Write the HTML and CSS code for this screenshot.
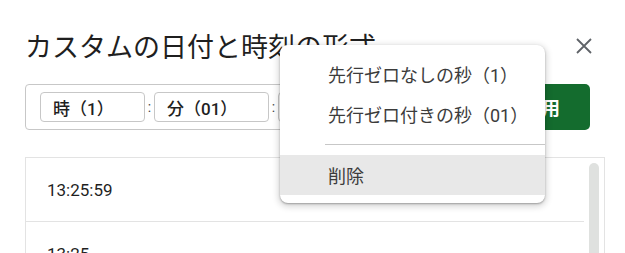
FILE: index.html
```html
<!DOCTYPE html>
<html lang="ja">
<head>
    <meta charset="UTF-8">
    <meta name="viewport" content="width=device-width, initial-scale=1.0">
    <title>カスタムの日付と時刻の形式</title>
    <link rel="stylesheet" href="styles.css">
</head>
<body>
    <div class="dialog">
        <div class="dialog-header">
            <h1 class="dialog-title">カスタムの日付と時刻の形式</h1>
            <button class="close-btn" aria-label="閉じる">
                <svg width="16" height="16" viewBox="0 0 16 16">
                    <path d="M1 1 L15 15 M15 1 L1 15" stroke="#5f6368" stroke-width="1.8" fill="none"/>
                </svg>
            </button>
        </div>

        <div class="format-row">
            <div class="format-input">
                <span class="chip chip-hour">時（1）</span>
                <span class="sep">:</span>
                <span class="chip chip-min">分（01）</span>
                <span class="sep">:</span>
                <span class="chip">秒（01）</span>
            </div>
            <button class="apply-btn">適用</button>
        </div>

        <div class="format-list">
            <div class="list-rows">
                <div class="list-row">13:25:59</div>
                <div class="list-row">13:25</div>
            </div>
            <div class="scroll-track"><div class="scroll-thumb"></div></div>
        </div>

        <!-- context menu for the seconds chip -->
        <div class="menu">
            <div class="menu-item">先行ゼロなしの秒（1）</div>
            <div class="menu-item">先行ゼロ付きの秒（01）</div>
            <div class="menu-divider"></div>
            <div class="menu-item active">削除</div>
        </div>
    </div>
</body>
</html>
```

FILE: styles.css
```css
body {
    margin: 0;
    background-color: #ffffff;
    font-family: Roboto, "Noto Sans CJK JP", sans-serif;
    color: #1f1f1f;
    overflow: hidden;
}

.dialog {
    position: relative;
    width: 625px;
    height: 253px;
    box-sizing: border-box;
    padding: 0 20px 0 25px;
}

.dialog-header {
    display: flex;
    justify-content: space-between;
    align-items: center;
    padding-top: 29px;
    margin-right: 13px;
}

.dialog-title {
    margin: 0;
    font-family: "Noto Sans CJK JP", sans-serif;
    font-size: 27px;
    font-weight: 400;
    line-height: 34px;
    color: #1f1f1f;
}

.close-btn {
    border: none;
    background: none;
    padding: 0;
    width: 16px;
    height: 16px;
    cursor: pointer;
}

.format-row {
    display: flex;
    gap: 12px;
    margin-top: 21px;
    margin-right: 15px;
}

.format-input {
    flex: 1;
    display: flex;
    align-items: center;
    height: 46px;
    box-sizing: border-box;
    padding: 0 12px 0 14px;
    border: 1px solid #c7c7c7;
    border-radius: 4px;
}

.chip {
    display: flex;
    align-items: center;
    height: 30px;
    box-sizing: border-box;
    padding: 0 12px;
    border: 1px solid #c7c7c7;
    border-radius: 4px;
    font-size: 17px;
    font-weight: 500;
    color: #1f1f1f;
}

.chip-hour {
    width: 105px;
}

.chip-min {
    width: 115px;
}

.sep {
    width: 9px;
    text-align: center;
    font-size: 14px;
    color: #444746;
}

.apply-btn {
    width: 96px;
    height: 46px;
    border: none;
    border-radius: 5px;
    background-color: #146c2e;
    color: #ffffff;
    font-family: "Noto Sans CJK JP", sans-serif;
    font-size: 18px;
    font-weight: 700;
    cursor: pointer;
}

.format-list {
    display: flex;
    margin-top: 27px;
    height: 120px;
    border: 1px solid #e3e3e3;
    border-bottom: none;
}

.list-rows {
    flex: 1;
}

.list-row {
    height: 64px;
    box-sizing: border-box;
    padding: 20px 0 0 21px;
    font-size: 17px;
    line-height: 24px;
    color: #1f1f1f;
    border-bottom: 1px solid #e3e3e3;
}

.scroll-track {
    width: 20px;
    padding-top: 5px;
    display: flex;
    justify-content: center;
}

.scroll-thumb {
    width: 10px;
    height: 200px;
    border-radius: 5px;
    background-color: #dfe1df;
}

.menu {
    position: absolute;
    left: 280px;
    top: 45px;
    width: 265px;
    padding: 9px 0 8px;
    background-color: #ffffff;
    border-radius: 8px;
    box-shadow: 0 2px 6px 2px rgba(0, 0, 0, 0.15), 0 1px 2px rgba(0, 0, 0, 0.3);
}

.menu-item {
    height: 40px;
    display: flex;
    align-items: center;
    padding-left: 48px;
    font-size: 18px;
    color: #3c3c3c;
}

.menu-item.active {
    background-color: #e8e8e8;
}

.menu-divider {
    height: 1px;
    margin: 10px 0 10px 45px;
    background-color: #c7c7c7;
}
```
